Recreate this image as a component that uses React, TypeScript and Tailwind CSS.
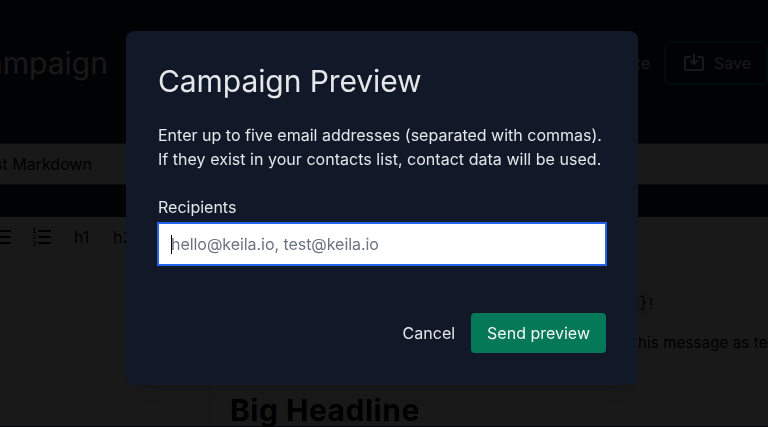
import React from 'react';

function SaveIcon() {
  return (
    <svg className="h-6 w-6 shrink-0" viewBox="0 0 24 24" fill="none" stroke="currentColor" strokeWidth="2" strokeLinecap="round" strokeLinejoin="round">
      <path d="M8 6H4.500A1.500 1.500 0 0 0 3 7.500v10A1.500 1.500 0 0 0 4.500 19h15a1.500 1.500 0 0 0 1.500-1.500v-10A1.500 1.500 0 0 0 19.500 6H16" />
      <path d="M12 3.500v9M9 10l3 3 3-3" />
    </svg>
  );
}

function Header() {
  return (
    <header className="flex h-[126px] items-center justify-between">
      <h1 className="flex w-[108px] shrink-0 justify-end whitespace-nowrap text-3xl text-gray-100">New Campaign</h1>
      <div className="flex shrink-0 items-center text-gray-100">
        <span className="pr-[14px]">Delete</span>
        <button className="flex h-11 w-[104px] items-center gap-2 rounded-md border-2 border-emerald-700 pl-4">
          <SaveIcon />
          <span>Save</span>
        </button>
      </div>
    </header>
  );
}

function BulletIcon() {
  return (
    <svg className="h-6 w-6 shrink-0" viewBox="0 0 24 24" stroke="currentColor" strokeWidth="2">
      <path d="M4 6h15M4 12h15M4 18h15" />
    </svg>
  );
}

function NumberedIcon() {
  return (
    <svg className="h-6 w-6 shrink-0" viewBox="0 0 24 24">
      <path d="M9 6h11M9 12h11M9 18h11" stroke="currentColor" strokeWidth="2" strokeLinecap="round" />
      <g fill="none" stroke="currentColor" strokeWidth="1">
        <path d="M3 4l1.500-1v4.500M3 7.500h3" />
        <path d="M3 10.500c.5-1.200 2.600-1 2.500.2 0 .8-1.500 1.600-2.500 2.800h3" />
        <path d="M3 17c1-.8 2.600-.5 2.500.4 0 .9-.8 1-1.500 1 .8 0 1.700.3 1.700 1.200 0 1.300-1.900 1.500-2.900.7" />
      </g>
    </svg>
  );
}

function Editor() {
  return (
    <section className="mt-8 h-[210px] overflow-hidden border-b border-gray-900 bg-white text-black">
      <div className="flex h-[41px] items-center border-b border-gray-100">
        <div className="-ml-2 flex w-[38px] shrink-0"><BulletIcon /></div>
        <div className="flex w-[44px] shrink-0"><NumberedIcon /></div>
        <span className="w-[39px] shrink-0">h1</span>
        <span>h2</span>
      </div>
      <div className="flex h-[168px]">
        <div className="w-[210px] shrink-0 border-r border-gray-200 bg-gray-50" />
        <article className="flex min-w-0 flex-1 flex-col pl-5 pt-[34px] text-[15px]">
          <div className="flex h-6 w-[423px] items-center justify-end">
            <code className="rounded bg-gray-200 px-px py-0.5 font-[Liberation_Mono,monospace]">{'{{ name }}'}</code>!
          </div>
          <p className="mt-[15px] h-6 whitespace-nowrap pl-[403px] leading-6 tracking-[0.15px]">this message as text</p>
          <h2 className="mt-[37px] whitespace-nowrap text-3xl font-bold tracking-[0.5px]">Big Headline</h2>
        </article>
      </div>
    </section>
  );
}

function PreviewDialog() {
  return (
    <div className="fixed inset-0 flex justify-center bg-black/90 pr-1 pt-[31px]">
      <div role="dialog" className="h-[354px] w-lg rounded-lg bg-[#111827] p-8 text-gray-200 shadow-xl">
        <h2 className="text-3xl tracking-[-0.08px]">Campaign Preview</h2>
        <p className="mt-6 whitespace-nowrap">
          <span className="tracking-[0.005px]">Enter up to five email addresses (separated with commas).</span>
          <br />
          <span className="tracking-[0.03px]">If they exist in your contacts list, contact data will be used.</span>
        </p>
        <div className="mt-6">
          <div>Recipients</div>
          <div className="mt-1 flex h-[42px] items-center border border-[#2563eb] bg-white pl-3 text-[#6b7280] outline outline-[#2563eb]">
            <span className="-mr-px h-[19px] w-px bg-black" />
            <span className="tracking-[-0.05px]">hello@keila.io, test@keila.io</span>
          </div>
        </div>
        <div className="mt-12 flex items-center justify-end gap-4">
          <button>Cancel</button>
          <button className="h-10 rounded bg-[#047857] px-4 text-gray-100">Send preview</button>
        </div>
      </div>
    </div>
  );
}

export default function App() {
  return (
    <main className="h-[427px] w-[768px] overflow-hidden bg-[#111827] font-[Inter,sans-serif] text-base">
      <Header />
      <div className="mt-[17px] flex h-[42px] items-center border-y border-gray-500 bg-white text-black">
        <div className="flex w-[92px] justify-end whitespace-nowrap">Test Markdown</div>
      </div>
      <Editor />
      <PreviewDialog />
    </main>
  );
}
